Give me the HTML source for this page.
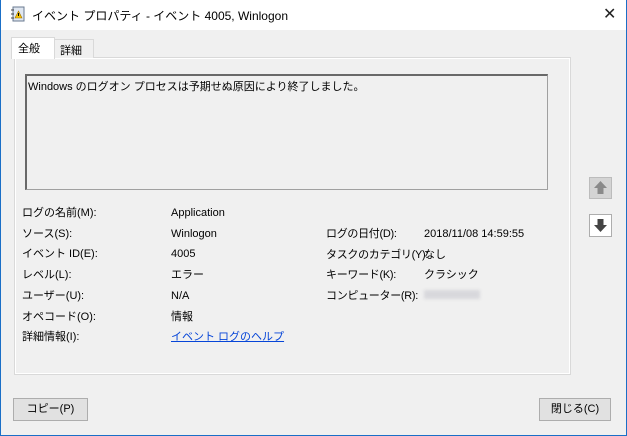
<!DOCTYPE html><html><head><meta charset="utf-8"><style>
*{margin:0;padding:0;box-sizing:border-box}
body{width:627px;height:436px;background:#f0f0f0;font-family:"Liberation Sans","Noto Sans CJK JP",sans-serif;font-size:11px;color:#000;position:relative;overflow:hidden}
.a{position:absolute;white-space:nowrap}
</style></head><body>
<div class="a" style="left:0;top:0;width:627px;height:30px;background:#fff"></div>
<div class="a" style="left:0;top:0;width:1px;height:436px;background:#1a6fc7"></div>
<div class="a" style="right:0;top:0;width:1px;height:436px;background:#1a6fc7"></div>
<div class="a" style="left:0;bottom:0;width:627px;height:1px;background:#1a6fc7"></div>
<svg class="a" style="left:10px;top:6px" width="16" height="16"><rect x="3" y="1" width="11" height="14" fill="#dfe6f0" stroke="#6a7a90"/><line x1="1" y1="4" x2="4" y2="4" stroke="#444"/><line x1="1" y1="8" x2="4" y2="8" stroke="#444"/><line x1="1" y1="12" x2="4" y2="12" stroke="#444"/><polygon points="8.5,5 12,12 5,12" fill="#f5c400" stroke="#a07000" stroke-width=".6"/><rect x="8" y="7" width="1" height="3" fill="#000"/></svg>
<div class="a" style="left:32px;top:7px;font-size:12px">イベント プロパティ - イベント 4005, Winlogon</div>
<div class="a" style="left:603px;top:4px;font-size:16px;color:#222">✕</div>
<div class="a" style="left:14px;top:57px;width:557px;height:318px;background:#f0f0f0;border:1px solid #d9d9d9;box-shadow:inset 0 0 0 1px #fff"></div>
<div class="a" style="left:54px;top:39px;width:40px;height:19px;border:1px solid #d9d9d9;border-bottom:none;background:#f0f0f0;padding:2px 0 0 5px">詳細</div>
<div class="a" style="left:11px;top:37px;width:44px;height:22px;border:1px solid #d9d9d9;border-bottom:none;background:#fff;padding:2px 0 0 6px">全般</div>
<div class="a" style="left:25px;top:74px;width:523px;height:116px;border:1px solid #a0a0a0;border-top:2px solid #696969;border-left:2px solid #696969;background:#f0f0f0;padding:2px 1px">Windows のログオン プロセスは予期せぬ原因により終了しました。</div>
<div class="a" style="left:22px;top:203px;line-height:20.7px">ログの名前(M):<br>ソース(S):<br>イベント ID(E):<br>レベル(L):<br>ユーザー(U):<br>オペコード(O):<br>詳細情報(I):</div>
<div class="a" style="left:171px;top:203px;line-height:20.7px">Application<br>Winlogon<br>4005<br>エラー<br>N/A<br>情報<br><span style="color:#0645d8;text-decoration:underline">イベント ログのヘルプ</span></div>
<div class="a" style="left:326px;top:224px;line-height:20.7px;letter-spacing:-0.3px">ログの日付(D):<br>タスクのカテゴリ(Y):<br>キーワード(K):<br>コンピューター(R):</div>
<div class="a" style="left:424px;top:224px;line-height:20.7px">2018/11/08 14:59:55<br>なし<br>クラシック<br><span style="display:inline-block;width:56px;height:9px;background:#d8d8dc;filter:blur(1.5px)"></span></div>
<div class="a" style="left:589px;top:177px;width:23px;height:22px;border:1px solid #bcbcbc;background:#d4d4d4"><svg width="21" height="20"><polygon points="10.5,3 17,10 13.5,10 13.5,16 7.5,16 7.5,10 4,10" fill="#8a8a8a"/></svg></div>
<div class="a" style="left:589px;top:214px;width:23px;height:23px;border:1px solid #adadad;background:#fff"><svg width="21" height="21"><polygon points="10.5,17 17,10 13.5,10 13.5,4 7.5,4 7.5,10 4,10" fill="#444"/></svg></div>
<div class="a" style="left:13px;top:398px;width:75px;height:23px;border:1px solid #adadad;background:#e1e1e1;text-align:center;line-height:21px">コピー(P)</div>
<div class="a" style="left:539px;top:398px;width:72px;height:23px;border:1px solid #adadad;background:#e1e1e1;text-align:center;line-height:21px">閉じる(C)</div>
</body></html>
